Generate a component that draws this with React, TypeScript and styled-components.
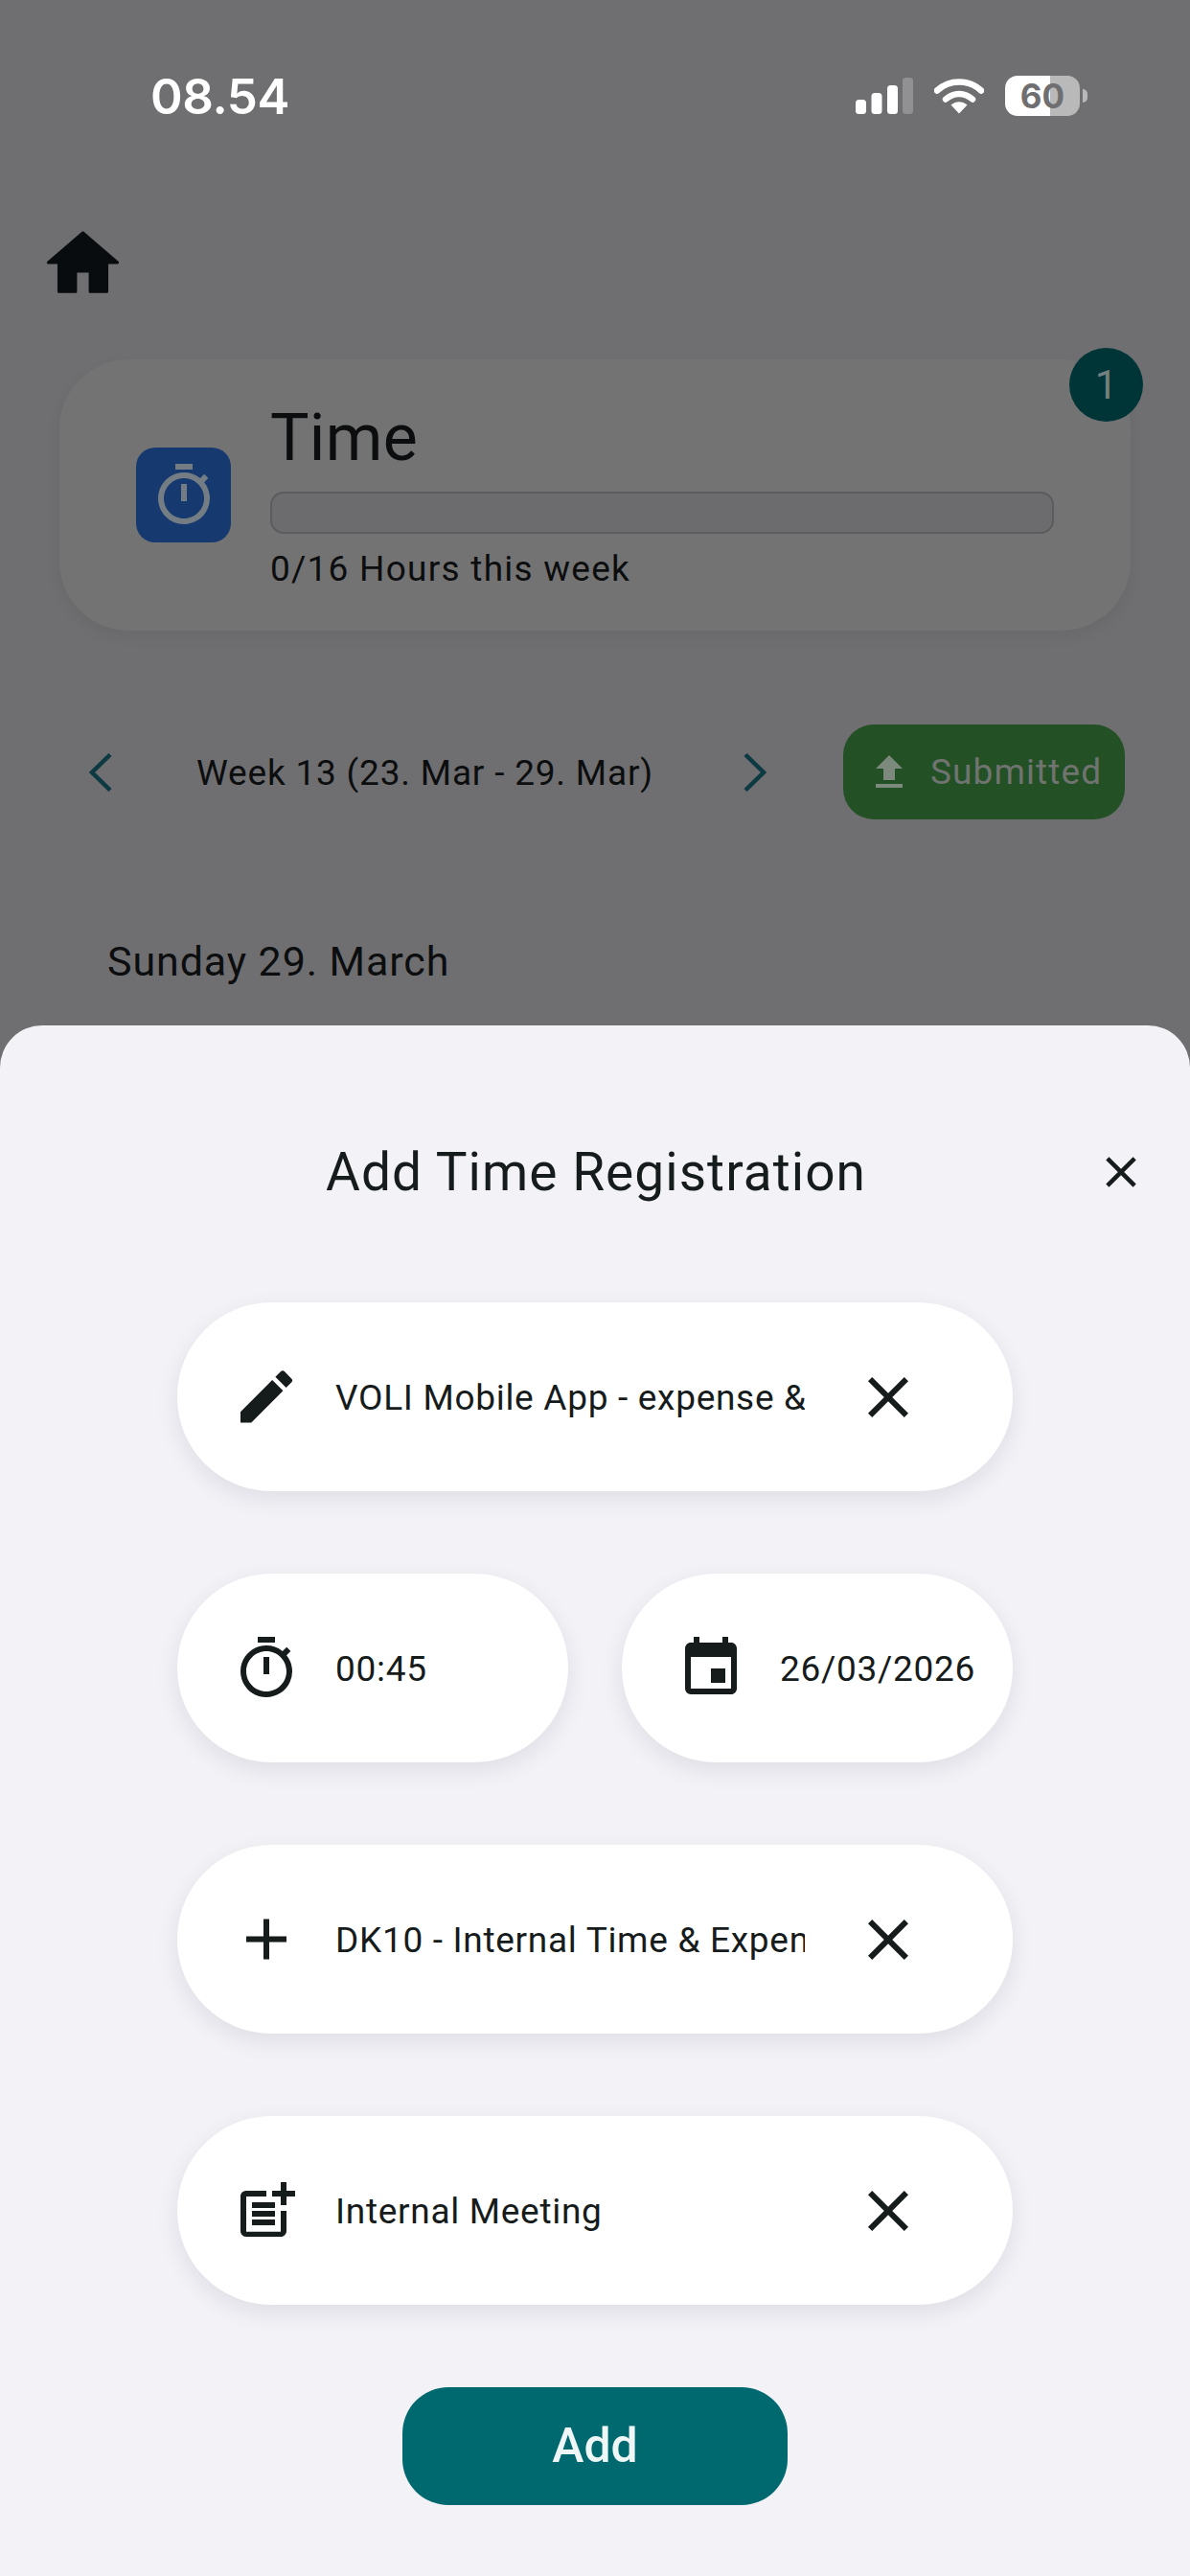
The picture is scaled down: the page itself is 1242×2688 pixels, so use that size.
import React from "react";
import styled, { createGlobalStyle } from "styled-components";
import {
  MdEdit,
  MdOutlineTimer,
  MdEvent,
  MdAdd,
  MdClose,
  MdOutlinePostAdd,
  MdFileUpload,
} from "react-icons/md";

const Global = createGlobalStyle`
  html, body { margin: 0; padding: 0; background: #6f6f71; }
  body { font-family: Roboto, "Noto Sans", sans-serif; }
  * { box-sizing: border-box; }
`;

const Page = styled.div`
  width: 1242px;
  height: 2688px;
  overflow: hidden;
  display: flex;
  flex-direction: column;
  background: #6f6f71;
`;

const Behind = styled.div`
  height: 1070px;
  flex: none;
  display: flex;
  flex-direction: column;
`;

const StatusBar = styled.div`
  height: 100px;
  margin-top: 50px;
  padding: 0 115px 0 157px;
  display: flex;
  align-items: center;
  justify-content: space-between;
`;

const Clock = styled.span`
  font-family: Inter, sans-serif;
  font-weight: 600;
  font-size: 51px;
  line-height: 1;
  color: #fff;
  letter-spacing: -0.4px;
`;

const StatusIcons = styled.div`
  display: flex;
  align-items: center;
  gap: 22px;
`;

const Battery = styled.div`
  position: relative;
  width: 78px;
  height: 42px;
  border-radius: 13px;
  background: linear-gradient(90deg, #fff 60%, #b9b9b9 60%);
  color: #6f6f71;
  font-family: Inter, sans-serif;
  font-weight: 700;
  font-size: 35px;
  line-height: 42px;
  text-align: center;
  &::after {
    content: "";
    position: absolute;
    right: -8px;
    top: 14px;
    width: 5px;
    height: 14px;
    background: #b9b9b9;
    border-radius: 0 5px 5px 0;
  }
`;

const HomeRow = styled.div`
  height: 84px;
  margin-top: 80px;
  margin-bottom: 5px;
  padding-left: 41px;
  display: flex;
  align-items: flex-start;
  svg { display: block; }
`;

const Card = styled.div`
  position: relative;
  margin: 56px 62px 0;
  height: 283px;
  border-radius: 72px;
  background: #737373;
  box-shadow: 0 6px 16px rgba(0, 0, 0, 0.06);
  padding: 42px 80px 0;
  display: flex;
  align-items: flex-start;
  gap: 41px;
`;

const Tile = styled.div`
  flex: none;
  margin-top: 50px;
  width: 99px;
  height: 99px;
  border-radius: 20px;
  background: #163a70;
  display: flex;
  align-items: center;
  justify-content: center;
  color: #747d84;
`;

const CardBody = styled.div`
  flex: 1;
  min-width: 0;
`;

const CardTitle = styled.div`
  font-size: 68px;
  line-height: 80px;
  color: #0c0d0e;
  letter-spacing: 0.3px;
`;

const Progress = styled.div`
  margin-top: 16px;
  height: 44px;
  border-radius: 14px;
  border: 2px solid #5c5c5e;
  background: #6c6c6e;
`;

const CardNote = styled.div`
  margin-top: 15px;
  font-size: 37px;
  line-height: 44px;
  color: #0c0d0e;
  letter-spacing: 1.25px;
`;

const Badge = styled.div`
  position: absolute;
  top: -12px;
  right: -13px;
  width: 77px;
  height: 77px;
  border-radius: 50%;
  background: #003538;
  color: #74807f;
  font-size: 42px;
  display: flex;
  align-items: center;
  justify-content: center;
`;

const WeekRow = styled.div`
  margin-top: 98px;
  height: 99px;
  padding: 0 68px 0 93px;
  display: flex;
  align-items: center;
  svg { display: block; flex: none; }
`;

const WeekLabel = styled.span`
  margin-left: 88px;
  margin-top: 2px;
  width: 571px;
  font-size: 37px;
  line-height: 44px;
  color: #0c0d0e;
  letter-spacing: 0.8px;
  white-space: nowrap;
`;

const Submitted = styled.div`
  margin-left: auto;
  width: 294px;
  height: 99px;
  border-radius: 32px;
  background: #245026;
  color: #6f7470;
  display: flex;
  align-items: center;
  padding-left: 24px;
  gap: 19px;
  font-size: 37px;
  letter-spacing: 1.1px;
`;

const DayLabel = styled.div`
  margin-top: 123px;
  padding-left: 112px;
  font-size: 43px;
  line-height: 50px;
  color: #0c0d0e;
  letter-spacing: 0.9px;
`;

const Sheet = styled.div`
  flex: 1;
  border-radius: 44px 44px 0 0;
  background: #f2f2f7;
  display: flex;
  flex-direction: column;
  align-items: center;
  position: relative;
`;

const SheetHead = styled.div`
  width: 100%;
  height: 289px;
  padding-top: 114px;
  padding-left: 2px;
  text-align: center;
  font-size: 55px;
  line-height: 78px;
  color: #161b1b;
  letter-spacing: 1.05px;
`;

const CloseButton = styled.div`
  position: absolute;
  top: 126px;
  right: 45px;
  color: #161b1b;
  display: flex;
`;

const Form = styled.div`
  width: 872px;
  display: flex;
  flex-direction: column;
  gap: 86px;
`;

const Split = styled.div`
  display: flex;
  justify-content: space-between;
`;

const Pill = styled.div<{ $half?: boolean }>`
  width: ${(p) => (p.$half ? "408px" : "872px")};
  height: 197px;
  flex: none;
  border-radius: 98px;
  background: #fff;
  box-shadow: 0 8px 24px rgba(20, 20, 40, 0.09);
  display: flex;
  align-items: center;
  padding-left: 57px;
  padding-right: ${(p) => (p.$half ? "0" : "94px")};
  color: #161b1b;
`;

const PillIcon = styled.span`
  width: 72px;
  height: 72px;
  flex: none;
  display: flex;
  align-items: center;
  justify-content: center;
`;

const PillText = styled.span`
  flex: 1;
  min-width: 0;
  margin-left: 36px;
  margin-top: 2px;
  overflow: hidden;
  white-space: nowrap;
  font-size: 37px;
  line-height: 50px;
  letter-spacing: 0.7px;
  color: #161b1b;
`;

const PillClear = styled.span`
  width: 72px;
  height: 72px;
  flex: none;
  margin-left: 51px;
  display: flex;
  align-items: center;
  justify-content: center;
`;

const AddButton = styled.div`
  margin-top: 86px;
  width: 402px;
  height: 123px;
  border-radius: 48px;
  background: #00696f;
  color: #eef6f6;
  font-size: 50px;
  font-weight: 500;
  padding-bottom: 2px;
  display: flex;
  align-items: center;
  justify-content: center;
`;

const Signal = () => (
  <svg width="60" height="38" viewBox="0 0 60 38">
    <rect x="0" y="23" width="11" height="15" rx="3.5" fill="#fff" />
    <rect x="16.500" y="16" width="11" height="22" rx="3.5" fill="#fff" />
    <rect x="33" y="8" width="11" height="30" rx="3.5" fill="#fff" />
    <rect x="49" y="0" width="11" height="38" rx="3.5" fill="#919193" />
  </svg>
);

const Wifi = () => (
  <svg width="52" height="38" viewBox="0 0 52 38" fill="none">
    <path d="M3 13.500C16 1.500 36 1.500 49 13.500" stroke="#fff" strokeWidth="6.500" strokeLinecap="round" />
    <path d="M12 22.500C20 15 32 15 40 22.500" stroke="#fff" strokeWidth="6.500" strokeLinecap="round" />
    <path d="M17.500 28.500C22.500 24 29.500 24 34.500 28.500L26 37.500Z" fill="#fff" />
  </svg>
);

const Home = () => (
  <svg width="91" height="91" viewBox="0 0 24 24">
    <path
      d="M10 19.600V14h4v5.600h4.600V11.600h2.900L12 3.400 2.500 11.600h2.900v8z"
      fill="#090c0e"
      stroke="#090c0e"
      strokeWidth="0.8"
      strokeLinejoin="round"
    />
  </svg>
);

const Chevron = ({ dir }: { dir: "left" | "right" }) => (
  <svg width="24" height="40" viewBox="0 0 24 40" fill="none">
    <polyline
      points={dir === "left" ? "22,1.500 3,20 22,38.500" : "2,1.500 21,20 2,38.500"}
      stroke="#0d3a42"
      strokeWidth="4.5"
    />
  </svg>
);

export default function App() {
  return (
    <Page>
      <Global />
      <Behind>
        <StatusBar>
          <Clock>08.54</Clock>
          <StatusIcons>
            <Signal />
            <Wifi />
            <Battery>60</Battery>
          </StatusIcons>
        </StatusBar>
        <HomeRow>
          <Home />
        </HomeRow>
        <Card>
          <Tile>
            <MdOutlineTimer size={72} />
          </Tile>
          <CardBody>
            <CardTitle>Time</CardTitle>
            <Progress />
            <CardNote>0/16 Hours this week</CardNote>
          </CardBody>
          <Badge>1</Badge>
        </Card>
        <WeekRow>
          <Chevron dir="left" />
          <WeekLabel>Week 13 (23. Mar - 29. Mar)</WeekLabel>
          <Chevron dir="right" />
          <Submitted>
            <MdFileUpload size={48} color="#7c8a7e" />
            Submitted
          </Submitted>
        </WeekRow>
        <DayLabel>Sunday 29. March</DayLabel>
      </Behind>
      <Sheet>
        <SheetHead>Add Time Registration</SheetHead>
        <CloseButton>
          <MdClose size={54} />
        </CloseButton>
        <Form>
          <Pill>
            <PillIcon>
              <MdEdit size={79} />
            </PillIcon>
            <PillText>VOLI Mobile App - expense &amp; travel</PillText>
            <PillClear>
              <MdClose size={72} />
            </PillClear>
          </Pill>
          <Split>
            <Pill $half>
              <PillIcon>
                <MdOutlineTimer size={72} />
              </PillIcon>
              <PillText>00:45</PillText>
            </Pill>
            <Pill $half>
              <PillIcon>
                <MdEvent size={72} />
              </PillIcon>
              <PillText>26/03/2026</PillText>
            </Pill>
          </Split>
          <Pill>
            <PillIcon>
              <MdAdd size={75} />
            </PillIcon>
            <PillText>DK10 - Internal Time &amp; Expenses</PillText>
            <PillClear>
              <MdClose size={72} />
            </PillClear>
          </Pill>
          <Pill>
            <PillIcon>
              <MdOutlinePostAdd size={72} />
            </PillIcon>
            <PillText>Internal Meeting</PillText>
            <PillClear>
              <MdClose size={72} />
            </PillClear>
          </Pill>
        </Form>
        <AddButton>Add</AddButton>
      </Sheet>
    </Page>
  );
}
